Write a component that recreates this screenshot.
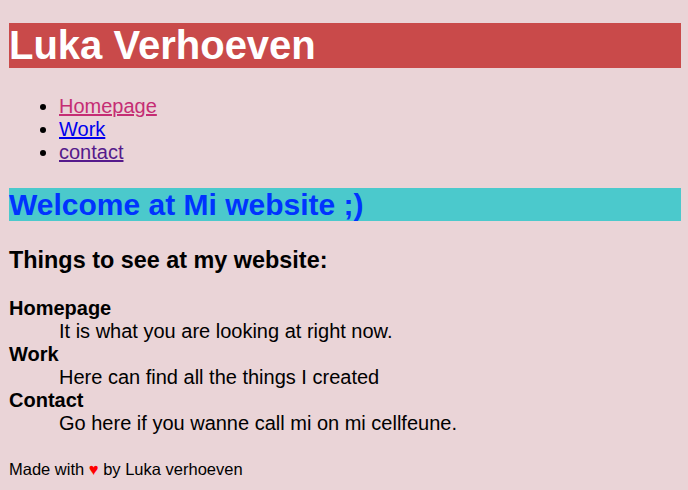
export default function App() {
  return (
    <div className="min-h-[490px] bg-[#ead4d7] pl-[9px] pr-[7px] pt-[23px] text-[20px] leading-[23px] text-black [font-family:'Liberation_Sans',Arial,sans-serif]">
      <h1 className="bg-[#c94a4a] text-[40px] font-bold leading-[45px] text-white">
        Luka Verhoeven
      </h1>

      <ul className="mt-[27px] list-disc pl-[50px]">
        <li>
          <a href="#" className="text-[#c52d74] underline">
            Homepage
          </a>
        </li>
        <li>
          <a href="#" className="text-[#0000ee] underline">
            Work
          </a>
        </li>
        <li>
          <a href="#" className="text-[#551a8b] underline">
            contact
          </a>
        </li>
      </ul>

      <h2 className="mt-[24px] bg-[#4bc9cc] text-[30px] font-bold leading-[33px] text-[#0033ff]">
        Welcome at Mi website ;)
      </h2>

      <h3 className="mt-[26px] text-[23.4px] font-bold leading-[27px]">
        Things to see at my website:
      </h3>

      <dl className="mt-[23px]">
        <dt className="font-bold">Homepage</dt>
        <dd className="pl-[50px]">It is what you are looking at right now.</dd>
        <dt className="font-bold">Work</dt>
        <dd className="pl-[50px]">Here can find all the things I created</dd>
        <dt className="font-bold">Contact</dt>
        <dd className="pl-[50px]">Go here if you wanne call mi on mi cellfeune.</dd>
      </dl>

      <footer className="mt-[25px] text-[16.5px] leading-[19px]">
        Made with <span className="text-[#ff0000]">♥</span> by Luka verhoeven
      </footer>
    </div>
  );
}
